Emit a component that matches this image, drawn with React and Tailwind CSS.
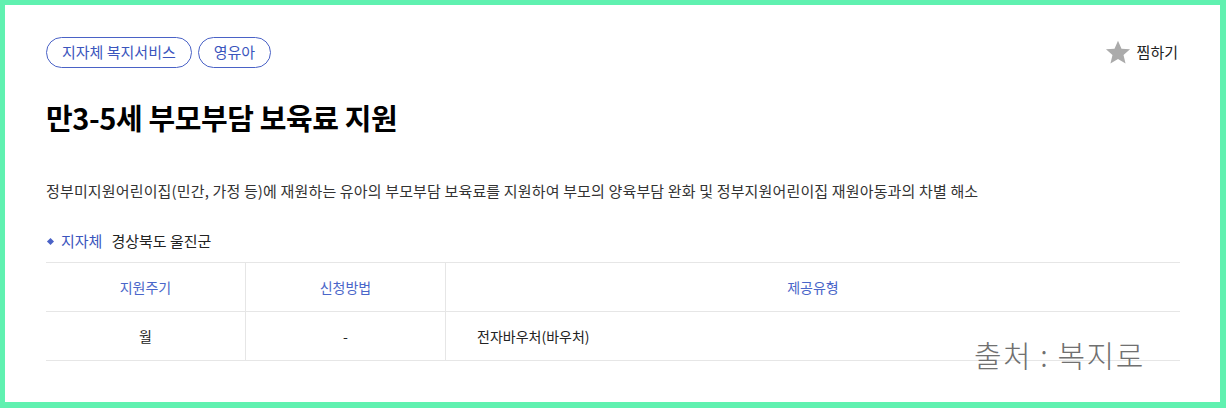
import React from "react";

const font = { fontFamily: '"Noto Sans CJK KR", "Noto Sans", sans-serif' };

function Star() {
  return (
    <svg width="28" height="27" viewBox="0 0 24 24" className="block">
      <path
        d="M12 1.5l3.1 7.1 7.6.6-5.8 5 1.8 7.5L12 17.7l-6.7 4 1.8-7.5-5.8-5 7.6-.6z"
        fill="#ababab"
      />
    </svg>
  );
}

export default function App() {
  return (
    <div
      className="relative w-[1226px] h-[408px] bg-[#60f1b0] pt-[5px] pl-[5px] pr-[6px] pb-[6px]"
      style={font}
    >
      <div className="h-full bg-white pt-[32px] pl-[41px] pr-[40px]">
        <div className="flex items-center justify-between h-[31px]">
          <div className="flex gap-[6px]">
            <span className="h-[31px] px-[15px] flex items-center rounded-full border border-[#4a62c6] text-[15px] text-[#3b55bd]">
              지자체 복지서비스
            </span>
            <span className="h-[31px] px-[15px] flex items-center rounded-full border border-[#4a62c6] text-[15px] text-[#3b55bd]">
              영유아
            </span>
          </div>
          <div className="flex items-center gap-[5px] pr-[2px]">
            <Star />
            <span className="text-[15px] text-[#222]">찜하기</span>
          </div>
        </div>
        <h1 className="mt-[29px] text-[29px] leading-[40px] font-bold text-black tracking-[-0.4px]">
          만3-5세 부모부담 보육료 지원
        </h1>
        <p className="mt-[43px] text-[15px] leading-[22px] text-[#333] tracking-[0.15px]">
          정부미지원어린이집(민간, 가정 등)에 재원하는 유아의 부모부담 보육료를 지원하여 부모의 양육부담 완화 및 정부지원어린이집 재원아동과의 차별 해소
        </p>
        <div className="mt-[28px] flex items-center h-[22px] text-[15px]">
          <span className="w-[5px] h-[5px] bg-[#4a62c6] rotate-45 ml-[2px] mr-[8px]" />
          <span className="text-[#3b55bd]">지자체</span>
          <span className="ml-[9px] text-[#222]">경상북도 울진군</span>
        </div>
        <div className="mt-[10px] border-t border-[#e6e6e6] text-[14px]">
          <div className="grid grid-cols-[200px_200px_1fr] h-[49px] border-b border-[#e6e6e6] text-[#4a66c9]">
            <div className="flex items-center justify-center border-r border-[#e6e6e6]">지원주기</div>
            <div className="flex items-center justify-center border-r border-[#e6e6e6]">신청방법</div>
            <div className="flex items-center justify-center">제공유형</div>
          </div>
          <div className="grid grid-cols-[200px_200px_1fr] h-[49px] border-b border-[#e6e6e6] text-[#222]">
            <div className="flex items-center justify-center border-r border-[#e6e6e6]">월</div>
            <div className="flex items-center justify-center border-r border-[#e6e6e6]">-</div>
            <div className="flex items-center pl-[31px]">전자바우처(바우처)</div>
          </div>
        </div>
      </div>
      <div className="absolute left-[974px] top-[334px] text-[30px] leading-[40px] font-light text-[#707070] tracking-[1.5px]">
        출처 : 복지로
      </div>
    </div>
  );
}
